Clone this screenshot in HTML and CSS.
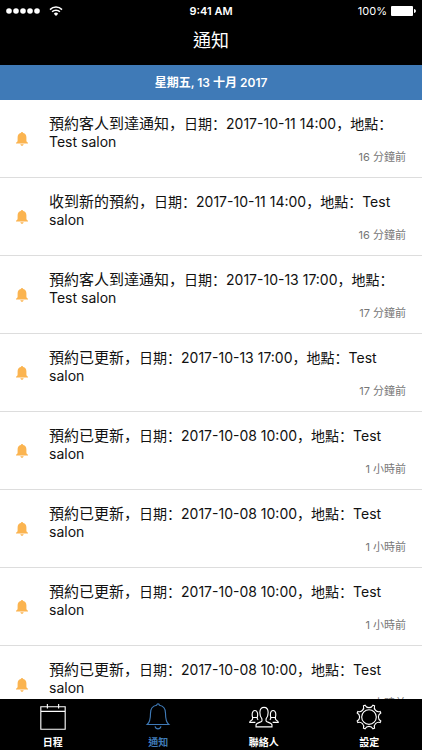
FILE: index.html
```
<!DOCTYPE html>
<html lang="zh-Hant">
<head>
    <meta charset="UTF-8">
    <meta name="viewport" content="width=device-width, initial-scale=1.0">
    <title>通知</title>
    <link rel="stylesheet" href="styles.css">
</head>
<body>
    <!-- 共用圖示 -->
    <svg class="sprite" aria-hidden="true">
        <symbol id="bell" viewBox="0 0 12 14">
            <path d="M6 0c-.7 0-1.1.4-1.2.9C2.700 1.400 1.600 3.100 1.600 5.300v3.200c0 1-.5 1.700-1.600 2.300v.7h12v-.7c-1.100-.6-1.600-1.300-1.600-2.300V5.300c0-2.200-1.100-3.900-3.200-4.400C7.100.4 6.700 0 6 0zM4.300 12.200c.2.900.8 1.500 1.700 1.500s1.500-.6 1.700-1.500z"/>
        </symbol>
    </svg>
    <div class="wrapper">
        <!-- 頂部 -->
        <header class="header">
            <div class="status">
                <div class="signal">
                    <svg width="35" height="6" viewBox="0 0 35 6">
                        <circle cx="3" cy="3" r="2.800"/>
                        <circle cx="10" cy="3" r="2.800"/>
                        <circle cx="17" cy="3" r="2.800"/>
                        <circle cx="24" cy="3" r="2.800"/>
                        <circle cx="31" cy="3" r="2.800"/>
                    </svg>
                    <svg class="wifi" width="14" height="10" viewBox="0 0 14 10">
                        <path d="M1 3.600a8.500 8.500 0 0 1 12 0M3.100 5.800a5.500 5.500 0 0 1 7.800 0"/>
                        <path class="dot" d="M4.800 7.700a3.100 3.100 0 0 1 4.400 0L7 9.900z"/>
                    </svg>
                </div>
                <span class="clock">9:41 AM</span>
                <div class="power">
                    <span>100%</span>
                    <svg width="25" height="10" viewBox="0 0 25 10">
                        <rect width="22" height="10" rx="1"/>
                        <path d="M23 3c1.300.3 1.900 1 1.900 2s-.6 1.700-1.900 2z"/>
                    </svg>
                </div>
            </div>
            <h1>通知</h1>
        </header>
        <h2 class="date">星期五, 13 十月 2017</h2>
        <!-- 通知列表 -->
        <ul class="list" lang="zh-Hans">
            <li>
                <svg class="bell"><use href="#bell"/></svg>
                <div class="info">
                    <p><span>預約客人到達通知，</span>日期：2017-10-11 14:00，地點：Test salon</p>
                    <time>16 分鐘前</time>
                </div>
            </li>
            <li>
                <svg class="bell"><use href="#bell"/></svg>
                <div class="info">
                    <p><span>收到新的預約，</span>日期：2017-10-11 14:00，地點：Test salon</p>
                    <time>16 分鐘前</time>
                </div>
            </li>
            <li>
                <svg class="bell"><use href="#bell"/></svg>
                <div class="info">
                    <p><span>預約客人到達通知，</span>日期：2017-10-13 17:00，地點：Test salon</p>
                    <time>17 分鐘前</time>
                </div>
            </li>
            <li>
                <svg class="bell"><use href="#bell"/></svg>
                <div class="info">
                    <p><span>預約已更新，</span>日期：2017-10-13 17:00，地點：Test salon</p>
                    <time>17 分鐘前</time>
                </div>
            </li>
            <li>
                <svg class="bell"><use href="#bell"/></svg>
                <div class="info">
                    <p><span>預約已更新，</span>日期：2017-10-08 10:00，地點：Test salon</p>
                    <time>1 小時前</time>
                </div>
            </li>
            <li>
                <svg class="bell"><use href="#bell"/></svg>
                <div class="info">
                    <p><span>預約已更新，</span>日期：2017-10-08 10:00，地點：Test salon</p>
                    <time>1 小時前</time>
                </div>
            </li>
            <li>
                <svg class="bell"><use href="#bell"/></svg>
                <div class="info">
                    <p><span>預約已更新，</span>日期：2017-10-08 10:00，地點：Test salon</p>
                    <time>1 小時前</time>
                </div>
            </li>
            <li>
                <svg class="bell"><use href="#bell"/></svg>
                <div class="info">
                    <p><span>預約已更新，</span>日期：2017-10-08 10:00，地點：Test salon</p>
                    <time>1 小時前</time>
                </div>
            </li>
        </ul>
        <!-- 底部導航 -->
        <nav class="tabs">
            <a href="#calendar">
                <svg viewBox="0 0 32 32">
                    <path d="M3 5h26v24H3zM3 10h26M10 2v5M22 2v5"/>
                </svg>
                <span>日程</span>
            </a>
            <a href="#notice" class="active" aria-current="page">
                <svg viewBox="0 0 32 32">
                    <path d="M14.500 3.500a1.500 1.500 0 0 1 3 0c4.500.7 6.500 4.200 6.500 8.500 0 6 .5 9.500 3.500 12h-23c3-2.500 3.500-6 3.500-12 0-4.300 2-7.800 6.500-8.500zM12.800 26c.5 1.800 1.600 2.600 3.200 2.600s2.700-.8 3.200-2.600"/>
                </svg>
                <span>通知</span>
            </a>
            <a href="#contacts">
                <svg viewBox="0 0 32 32">
                    <path d="M13.800 18c-1.500-1.600-2.200-4.300-2.200-6.900 0-3.700 1.700-5.400 4.400-5.400s4.400 1.700 4.400 5.400c0 2.600-.7 5.300-2.200 6.900v2.200c0 1.500 6.300 1.800 6.300 4.300v2h-17v-2c0-2.500 6.300-2.800 6.300-4.300z"/>
                    <path d="M8.800 16.500h-5c.4 2-.2 2.700-1.500 3.200-1 .4-1.500.8-1.500 2h6M3.800 16.500c-.8-2.800-.6-7.500 2.500-7.500s3.300 4.700 2.500 7.500c-.2 1.400.2 2 1 2.500"/>
                    <path d="M23.200 16.500h5c-.4 2 .2 2.700 1.500 3.200 1 .4 1.500.8 1.500 2h-6M28.200 16.500c.8-2.800.6-7.500-2.500-7.500s-3.300 4.700-2.500 7.500c.2 1.400-.2 2-1 2.500"/>
                </svg>
                <span>聯絡人</span>
            </a>
            <a href="#settings">
                <svg viewBox="0 0 32 32">
                    <circle cx="16" cy="16" r="7.800"/>
                    <path d="M11.800 3.400a4.700 4.700 0 0 0 8.400 0l1.700.7a4.700 4.700 0 0 0 6 6l.7 1.700a4.700 4.700 0 0 0 0 8.400l-.7 1.700a4.700 4.700 0 0 0-6 6l-1.700.7a4.700 4.700 0 0 0-8.400 0l-1.700-.7a4.700 4.700 0 0 0-6-6l-.7-1.700a4.700 4.700 0 0 0 0-8.400l.7-1.700a4.700 4.700 0 0 0 6-6z"/>
                </svg>
                <span>設定</span>
            </a>
        </nav>
    </div>
</body>
</html>
```
FILE: styles.css
```
*{
    padding: 0;
    margin: 0;
    list-style: none;
    box-sizing: border-box;
}
html, body{
    width: 100%;
    height: 100%;
}
body{
    font-family: Inter, "Noto Sans CJK SC", sans-serif;
    color: #111;
    background: #fff;
}
.sprite{
    display: none;
}
.wrapper{
    width: 100%;
    height: 100%;
    display: flex;
    flex-direction: column;
}

/* 頂部 */
.header{
    background: #000;
    color: #fff;
    padding-bottom: 5px;
}
.status{
    height: 22px;
    padding: 0 6px;
    display: grid;
    grid-template-columns: 1fr auto 1fr;
    align-items: center;
    font-size: 11px;
}
.status svg{
    fill: #fff;
}
.status .wifi{
    fill: none;
    stroke: #fff;
    stroke-width: 1.5;
}
.wifi .dot{
    fill: #fff;
    stroke: none;
}
.signal, .power{
    display: flex;
    align-items: center;
    gap: 8px;
}
.power{
    justify-content: flex-end;
    gap: 4px;
}
.clock{
    font-weight: 600;
}
.header h1{
    font-size: 18px;
    line-height: 38px;
    font-weight: 400;
    text-align: center;
}
.date{
    background: #3f7ab7;
    color: #fff;
    font-size: 12px;
    line-height: 35px;
    font-weight: 600;
    text-align: center;
}

/* 通知列表 */
.list{
    flex: 1;
    min-height: 0;
    overflow-y: auto;
    scrollbar-width: none;
}
.list li{
    display: flex;
    align-items: center;
    padding: 15px 16px 14px;
    border-bottom: 1px solid #ddd;
}
.bell{
    width: 12px;
    height: 14px;
    margin-right: 21px;
    fill: #fbb450;
}
.info{
    flex: 1;
}
.info p{
    font-size: 14px;
    line-height: 18px;
}
.info p span{
    font-size: 15px;
    line-height: 1;
}
.info time{
    display: block;
    font-size: 11px;
    line-height: 12px;
    color: #777;
    text-align: right;
}

/* 底部導航 */
.tabs{
    display: flex;
    background: #000;
}
.tabs a{
    flex: 1;
    display: flex;
    flex-direction: column;
    align-items: center;
    padding-top: 3px;
    color: #fff;
    font-size: 10px;
    line-height: 16px;
    font-weight: 600;
    text-decoration: none;
}
.tabs svg{
    width: 30px;
    height: 30px;
    margin-bottom: 2px;
    fill: none;
    stroke: currentColor;
    stroke-width: 1.2;
}
.tabs .active{
    color: #3f7ab7;
}
```
